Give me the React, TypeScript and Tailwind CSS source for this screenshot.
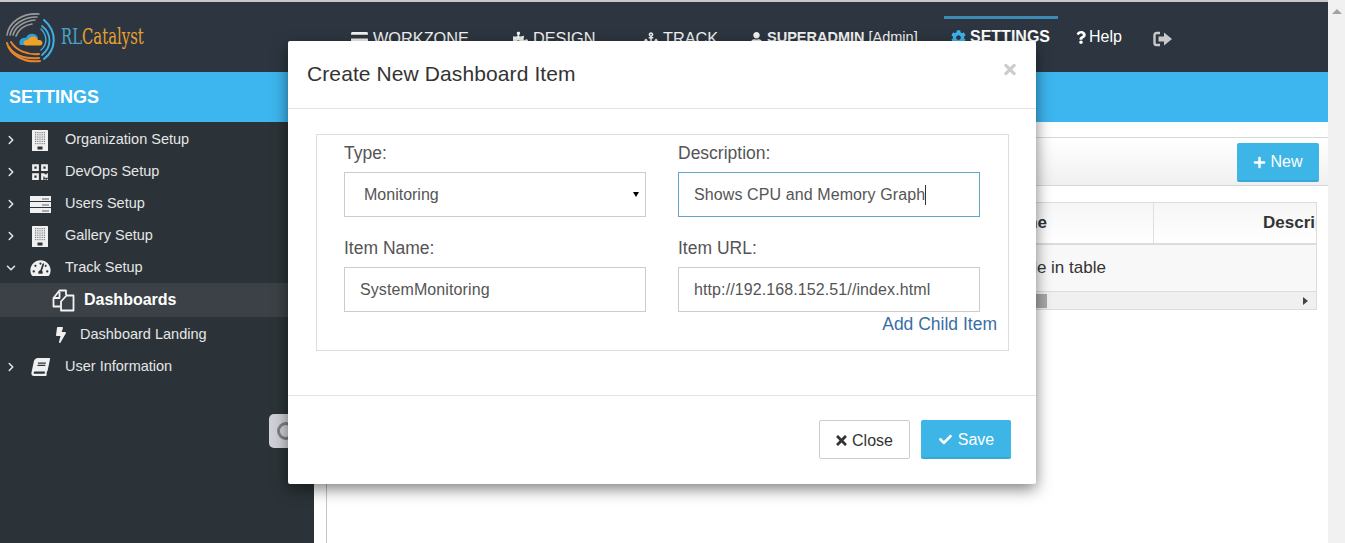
import {
  FaAnchor,
  FaBolt,
  FaBook,
  FaCheck,
  FaCog,
  FaCreditCard,
  FaPlus,
  FaPuzzlePiece,
  FaQrcode,
  FaQuestion,
  FaTachometerAlt,
  FaTimes,
  FaUser,
} from "react-icons/fa";
import { LuChevronDown, LuChevronRight } from "react-icons/lu";
import type { ReactNode } from "react";

function BuildingIcon() {
  const dots = [];
  for (let row = 0; row < 6; row++) {
    for (let col = 0; col < 5; col++) {
      dots.push(<rect key={`${row}-${col}`} x={3 + col * 2.2} y={2 + row * 2.2} width="1.200" height="1.200" fill="#7d8286" />);
    }
  }
  return (
    <svg width="16" height="21" viewBox="0 0 16 21">
      <rect width="16" height="21" rx="0.500" fill="#f0f0f0" />
      {dots}
      <rect x="5.500" y="16.500" width="5" height="3" fill="#2b3338" />
    </svg>
  );
}

function ServerIcon() {
  return (
    <svg width="21" height="17" viewBox="0 0 21 17">
      {[0, 6, 12].map((y) => (
        <g key={y}>
          <rect y={y} width="21" height="5" fill="#f0f0f0" />
          <rect x="12" y={y + 2.5} width="7" height="1" fill="#5b6166" />
        </g>
      ))}
    </svg>
  );
}

function FilesIcon() {
  return (
    <svg width="23" height="23" viewBox="0 0 23 23" fill="none" stroke="#f4f4f4" strokeWidth="1.800" strokeLinejoin="round">
      <path d="M8 17.500H1.500V9L7.500 1.500H14V6" />
      <path d="M1.500 9H7.500V3" />
      <path d="M14.500 6.500H21.500V21.500H9V12.500Z" />
    </svg>
  );
}

const sideItems = [
  { label: "Organization Setup", icon: <BuildingIcon /> },
  { label: "DevOps Setup", icon: <FaQrcode className="w-[18px] h-[18px] text-[#f0f0f0]" /> },
  { label: "Users Setup", icon: <ServerIcon /> },
  { label: "Gallery Setup", icon: <BuildingIcon /> },
];

function Logo() {
  return (
    <div className="flex items-center w-[351px] pl-[6px] pt-[1px] self-stretch">
      <svg width="52" height="52" viewBox="0 0 52 52" fill="none" className="shrink-0">
        <g stroke="#9a9a9a" strokeLinecap="round">
          <path d="M1 23C3 10 16 1 33 2" strokeWidth="1.600" />
          <path d="M4 23C6 13 17 5 31 5" strokeWidth="1.600" />
          <path d="M7 23C9 15 18 9 29 8" strokeWidth="1.600" />
          <path d="M10 24C12 18 18 13 26 12" strokeWidth="1.600" />
        </g>
        <g stroke="#e8872a" strokeLinecap="round">
          <path d="M1 31C4 43 18 51 34 49" strokeWidth="2" />
          <path d="M3 35C8 43 19 47 33 46" strokeWidth="2" />
          <path d="M5 30C10 38 20 43 33 42" strokeWidth="2" />
        </g>
        <g stroke="#3fb0e4" strokeLinecap="round">
          <path d="M38 8C52 20 50 38 38 47" strokeWidth="2" />
          <path d="M36 14C46 22 46 35 36 43" strokeWidth="1.800" />
          <path d="M35 17C42 24 41 33 35 38" strokeWidth="1.400" />
        </g>
        <path d="M14 33C12 28 16 25 20 26C22 20 31 21 32 26L28 33Z" fill="#2f9fd8" />
        <path d="M20 33.500C16 33 17 27 22 28C24 23 31 24 32 28C37 27 38 33 34 33.500Z" fill="#f0a022" />
      </svg>
      <span className="font-['DejaVu_Serif',serif] text-[23px] leading-none ml-[3px] -mt-[3px] origin-left scale-x-[0.645] whitespace-nowrap">
        <span className="text-[#4aa3c8]">RL</span>
        <span className="text-[#e9a12d]">Catalyst</span>
      </span>
    </div>
  );
}

function NavItem({ icon, width, children }: { icon: ReactNode; width: string; children: ReactNode }) {
  return (
    <div className={`flex items-center gap-[5px] pt-[2px] text-[16.300px] text-[#f2f2f2] whitespace-nowrap ${width}`}>
      {icon}
      <span>{children}</span>
    </div>
  );
}

function Field({ label, children }: { label: string; children: ReactNode }) {
  return (
    <div className="flex flex-col">
      <label className="text-[17.500px] leading-[20px] text-[#555] mb-[9px]">{label}</label>
      {children}
    </div>
  );
}

function TextBox({ value, focused }: { value: string; focused?: boolean }) {
  return (
    <div
      className={`h-[45px] flex items-center pl-[15px] text-[16px] tracking-[0.100px] text-[#555] border ${
        focused ? "border-[#66a3cc]" : "border-[#ccc]"
      }`}
    >
      {value}
      {focused && <span className="w-px h-[20px] bg-[#333]" />}
    </div>
  );
}

function App() {
  return (
    <div className="relative h-[543px] w-[1345px] overflow-hidden bg-white font-['Liberation_Sans',Arial,sans-serif] flex">
      <div className="w-[1328px] flex flex-col">
        <div className="h-[2px] bg-[#c8c8c8]" />
        <header className="h-[70px] bg-[#2d3640] flex items-center">
          <Logo />
          <NavItem icon={<FaCreditCard className="w-[17px] h-[15px]" />} width="w-[162px]">WORKZONE</NavItem>
          <NavItem icon={<FaPuzzlePiece className="w-[15px] h-[15px]" />} width="w-[131px]">DESIGN</NavItem>
          <NavItem icon={<FaAnchor className="w-[14px] h-[15px]" />} width="w-[106px]">TRACK</NavItem>
          <div className="w-[194px] flex items-center gap-[4px] pt-[2px] text-[14.500px] text-[#f2f2f2] whitespace-nowrap">
            <FaUser className="w-[13px] h-[13px]" />
            <span><b>SUPERADMIN</b> [Admin]</span>
          </div>
          <div className="w-[114px] relative self-stretch flex items-center gap-[4px] pl-[7px] text-[16px] font-bold text-white whitespace-nowrap">
            <span className="absolute left-0 right-0 top-[14px] h-[3px] bg-[#3d8bb5]" />
            <FaCog className="w-[15px] h-[15px] text-[#3db5ee]" />
            SETTINGS
          </div>
          <div className="ml-[18px] w-[77px] flex items-center gap-[3px] text-[16px] text-white">
            <FaQuestion className="w-[10px] h-[13px]" />
            Help
          </div>
          <svg width="20" height="16" viewBox="0 0 20 16" className="mt-[3px]">
            <path d="M7 2H3.500A2 2 0 0 0 1.500 4V12A2 2 0 0 0 3.500 14H7" fill="none" stroke="#c9c9c9" strokeWidth="2.400" />
            <path d="M5.500 5.500H11V1.500L19 8L11 14.500V10.500H5.500Z" fill="#c9c9c9" />
          </svg>
        </header>
        <div className="h-[50px] bg-[#3db5ee] flex items-center pl-[9px] pt-px text-[18px] font-bold text-white">SETTINGS</div>
        <div className="flex flex-1 min-h-0">
          <aside className="w-[314px] bg-[#2b3338] pt-px text-[14.500px] text-[#e6e6e6]">
            {sideItems.map((item) => (
              <div key={item.label} className="h-8 pt-[2px] flex items-center">
                <LuChevronRight strokeWidth={2.6} className="w-[14px] h-[14px] ml-1" />
                <div className="w-[47px] flex justify-center pr-[3px]">{item.icon}</div>
                {item.label}
              </div>
            ))}
            <div className="h-8 pt-[2px] flex items-center">
              <LuChevronDown strokeWidth={2.6} className="w-[14px] h-[14px] ml-1" />
              <div className="w-[47px] flex justify-center pr-[3px]">
                <FaTachometerAlt className="w-[21px] h-[18px] text-[#f0f0f0]" />
              </div>
              Track Setup
            </div>
            <div className="h-[34px] bg-[#3b4146] flex items-center pl-[52px] gap-[9px] font-bold text-[16px] text-white">
              <FilesIcon />
              Dashboards
            </div>
            <div className="h-[34px] pt-px flex items-center pl-[56px] gap-[14px]">
              <FaBolt className="w-[10px] h-[20px] text-[#f0f0f0]" />
              Dashboard Landing
            </div>
            <div className="h-[31px] flex items-center">
              <LuChevronRight strokeWidth={2.6} className="w-[14px] h-[14px] ml-1" />
              <div className="w-[47px] flex justify-center pr-[3px]">
                <FaBook className="w-[17px] h-[18px] text-[#f0f0f0] -skew-x-12" />
              </div>
              User Information
            </div>
          </aside>
          <main className="flex-1 min-w-0 pl-3 pt-[15px]">
            <div className="h-full border-l border-[#c4c4c4]">
              <div className="h-[49px] border-y border-[#d8d8d8] bg-gradient-to-b from-white to-[#f0f0f0] flex items-center justify-end pr-[9px]">
                <div className="mt-[2px] w-[82px] h-[39px] pt-px rounded-[2px] bg-[#3db5e6] border-b-2 border-[#38a8d6] flex items-center justify-center gap-[4px] text-[16px] text-white">
                  <FaPlus className="w-[13px] h-[13px]" />
                  New
                </div>
              </div>
              <div className="mt-4 ml-[11px] mr-[11px] border border-[#dcdcdc] overflow-hidden">
                <div className="h-[42px] flex border-b-2 border-[#dcdcdc] bg-gradient-to-b from-[#f6f6f6] to-white text-[17px] font-bold text-[#333] whitespace-nowrap">
                  <div className="w-[815px] shrink-0 flex items-center justify-end pr-[106px] border-r border-[#e0e0e0]">Item Name</div>
                  <div className="flex-1 flex items-center pl-[109px] overflow-hidden">Description</div>
                </div>
                <div className="h-[46px] bg-[#f8f8f8] flex items-center pl-[576px] text-[17px] text-[#333] whitespace-nowrap">No data available in table</div>
                <div className="h-[18px] bg-[#f0f0f0] border-t border-[#dcdcdc] flex items-center">
                  <div className="w-[708px] h-[14px] bg-[#a8a8a8]" />
                  <div className="flex-1" />
                  <div className="mr-[8px] w-0 h-0 border-y-4 border-y-transparent border-l-[5px] border-l-[#444]" />
                </div>
              </div>
            </div>
          </main>
        </div>
      </div>
      <div className="w-[17px] bg-[#f1f1f1] flex justify-center pt-[9px]">
        <div className="w-0 h-0 border-x-[5px] border-x-transparent border-b-[5px] border-b-[#a3a3a3]" />
      </div>

      <div className="absolute left-[269px] top-[414px] w-[30px] h-[34px] rounded-[5px] bg-[#d0d0d8] flex items-center pl-2">
        <div className="w-[18px] h-[18px] rounded-full border-[3px] border-[#808080]" />
      </div>

      <div className="absolute left-[288px] top-[41px] w-[748px] h-[443px] bg-white rounded-[2px] shadow-[0_5px_15px_rgba(0,0,0,0.5)] flex flex-col">
        <div className="h-[68px] border-b border-[#e5e5e5] flex items-center justify-between pl-[19px] pr-[20px]">
          <h4 className="text-[21px] text-[#333] tracking-[0.1px] -mt-[2px]">Create New Dashboard Item</h4>
          <FaTimes className="h-[17px] w-[12px] text-[#ccc] -mt-[11px]" />
        </div>
        <div className="h-[287px] pl-7 pr-[27px] pt-[25px] border-b border-[#e5e5e5]">
          <div className="h-[217px] border border-[#ddd] pl-[27px] pt-[8px]">
            <div className="grid grid-cols-[302px_302px] gap-x-8 gap-y-[21px]">
              <Field label="Type:">
                <div className="h-[45px] flex items-center justify-between pl-[19px] pr-[6px] text-[16px] text-[#555] border border-[#ccc]">
                  Monitoring
                  <span className="w-0 h-0 border-x-[3px] border-x-transparent border-t-[5px] border-t-black" />
                </div>
              </Field>
              <Field label="Description:">
                <TextBox value="Shows CPU and Memory Graph" focused />
              </Field>
              <Field label="Item Name:">
                <TextBox value="SystemMonitoring" />
              </Field>
              <Field label="Item URL:">
                <TextBox value="http://192.168.152.51//index.html" />
              </Field>
            </div>
            <div className="text-right pr-[11px] mt-[2px] text-[17.500px] leading-[20px] text-[#3a6ea5]">Add Child Item</div>
          </div>
        </div>
        <div className="flex-1 flex justify-end gap-[11px] pr-[25px] pt-[24px]">
          <div className="w-[91px] h-[39px] pt-[2px] rounded-[2px] border border-[#ccc] flex items-center justify-center gap-[5px] text-[16px] text-[#333]">
            <FaTimes className="w-[11px] h-[15px]" />
            Close
          </div>
          <div className="w-[90px] h-[39px] pt-[2px] rounded-[2px] bg-[#3db5e6] border-b-2 border-[#38a8d6] flex items-center justify-center gap-[5px] text-[16px] text-white">
            <FaCheck className="w-[15px] h-[13px]" />
            Save
          </div>
        </div>
      </div>
    </div>
  );
}

export default App;
